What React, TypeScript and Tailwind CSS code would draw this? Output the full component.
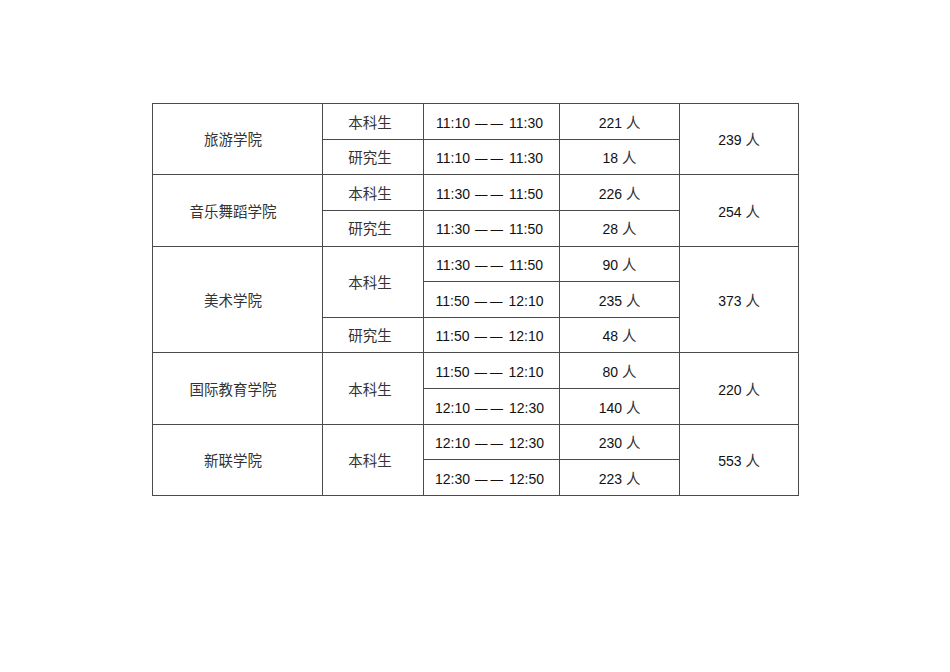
type Slot = { time: [string, string]; count: number };
type Group = { type: string; slots: Slot[] };
type College = { name: string; total: number; groups: Group[] };

const COLLEGES: College[] = [
  {
    name: "旅游学院",
    total: 239,
    groups: [
      { type: "本科生", slots: [{ time: ["11:10", "11:30"], count: 221 }] },
      { type: "研究生", slots: [{ time: ["11:10", "11:30"], count: 18 }] },
    ],
  },
  {
    name: "音乐舞蹈学院",
    total: 254,
    groups: [
      { type: "本科生", slots: [{ time: ["11:30", "11:50"], count: 226 }] },
      { type: "研究生", slots: [{ time: ["11:30", "11:50"], count: 28 }] },
    ],
  },
  {
    name: "美术学院",
    total: 373,
    groups: [
      {
        type: "本科生",
        slots: [
          { time: ["11:30", "11:50"], count: 90 },
          { time: ["11:50", "12:10"], count: 235 },
        ],
      },
      { type: "研究生", slots: [{ time: ["11:50", "12:10"], count: 48 }] },
    ],
  },
  {
    name: "国际教育学院",
    total: 220,
    groups: [
      {
        type: "本科生",
        slots: [
          { time: ["11:50", "12:10"], count: 80 },
          { time: ["12:10", "12:30"], count: 140 },
        ],
      },
    ],
  },
  {
    name: "新联学院",
    total: 553,
    groups: [
      {
        type: "本科生",
        slots: [
          { time: ["12:10", "12:30"], count: 230 },
          { time: ["12:30", "12:50"], count: 223 },
        ],
      },
    ],
  },
];

const cell = "border border-[#4a4a4a] p-0 pt-[3px] text-center align-middle leading-none";

function Cn({ children }: { children: string }) {
  return <span className="text-[14.5px] text-[#333]">{children}</span>;
}

function Count({ n }: { n: number }) {
  return (
    <span>
      {n} <Cn>人</Cn>
    </span>
  );
}

export default function App() {
  const rows: React.ReactNode[] = [];

  COLLEGES.forEach((college) => {
    const span = college.groups.reduce((acc, g) => acc + g.slots.length, 0);
    college.groups.forEach((group, gi) => {
      group.slots.forEach((slot, si) => {
        const first = gi === 0 && si === 0;
        rows.push(
          <tr key={`${college.name}-${gi}-${si}`} className="h-[35.64px]">
            {first && (
              <td rowSpan={span} className={`${cell} pr-[9px]`}>
                <Cn>{college.name}</Cn>
              </td>
            )}
            {si === 0 && (
              <td rowSpan={group.slots.length} className={`${cell} pr-[6px]`}>
                <Cn>{group.type}</Cn>
              </td>
            )}
            <td className={`${cell} pr-[4px]`}>
              {slot.time[0]}
              <span className="ml-[5px] text-[12.5px]">—</span>
              <span className="ml-[3px] text-[12.5px]">—</span>
              <span className="ml-[6px]">{slot.time[1]}</span>
            </td>
            <td className={cell}>
              <Count n={slot.count} />
            </td>
            {first && (
              <td rowSpan={span} className={cell}>
                <Count n={college.total} />
              </td>
            )}
          </tr>
        );
      });
    });
  });

  return (
    <div className="h-[672px] w-[950px] bg-white pt-[103px] pl-[152px] font-['Liberation_Sans','Noto_Sans_CJK_SC',sans-serif] text-[14px] text-[#111]">
      <table className="w-[646px] table-fixed border-collapse">
        <colgroup>
          <col className="w-[170px]" />
          <col className="w-[101px]" />
          <col className="w-[136px]" />
          <col className="w-[120px]" />
          <col className="w-[119px]" />
        </colgroup>
        <tbody>{rows}</tbody>
      </table>
    </div>
  );
}
